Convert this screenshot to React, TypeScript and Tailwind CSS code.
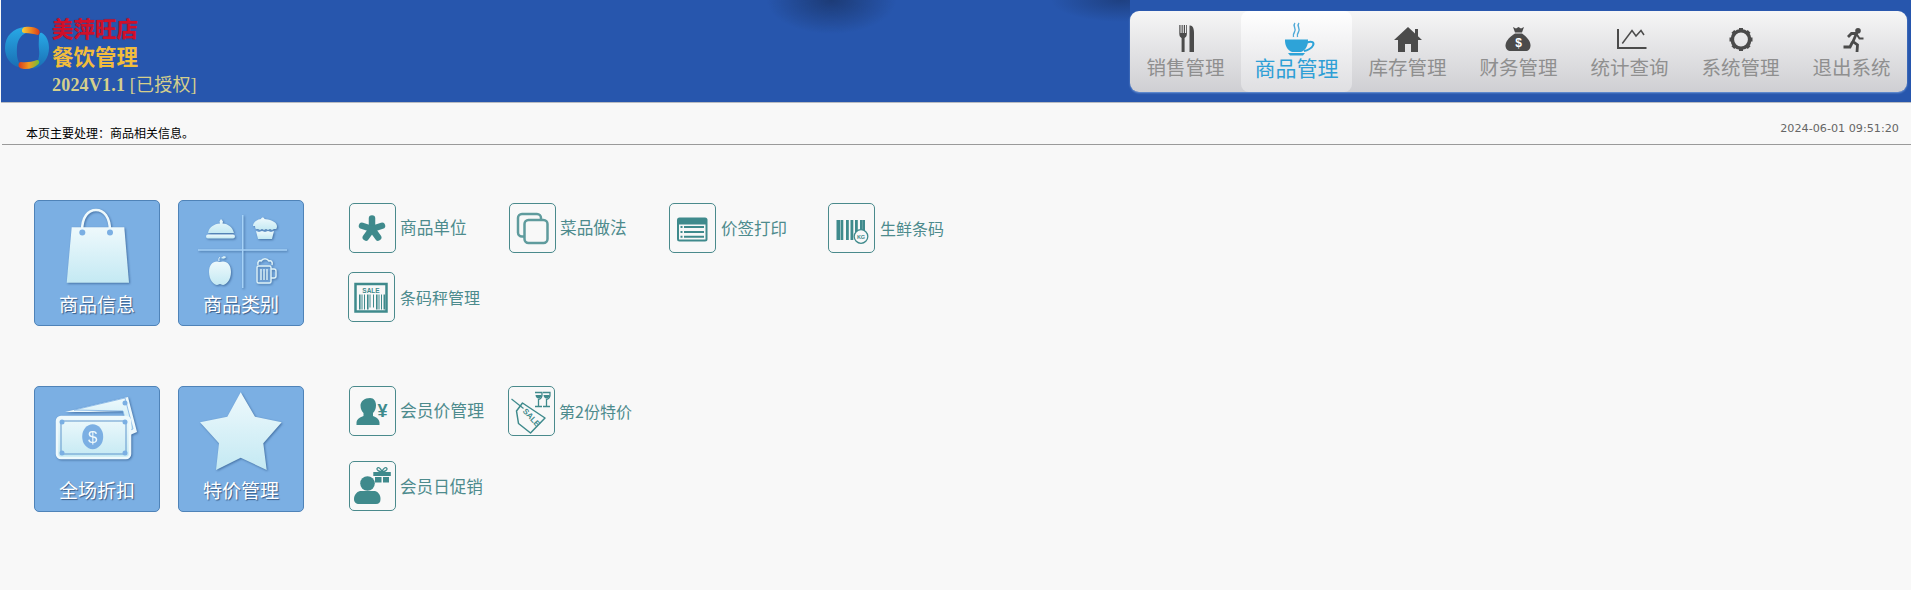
import { useId, type ReactNode } from 'react';

const GRAY = '#4b4b4b';
const TEAL = '#3f8a8c';

function NavIcon({ children }: { children: ReactNode }) {
    return <svg width="44" height="36" viewBox="0 0 44 36">{children}</svg>;
}

const navItems: { label: string; active?: boolean; icon: ReactNode }[] = [
    {
        label: '销售管理',
        icon: (
            <g fill={GRAY}>
                <path d="M15.3 5h1.2v8h1.1V5h1.1v8h1.1V5H21v8h1.1V5h.8v8.500c0 2.500-1 3.800-2.300 4.500V32h-3V18c-1.400-.7-2.300-2-2.300-4.500z" />
                <path d="M25.500 32V5.500C28.500 5 30 8 30 13v19z" />
            </g>
        ),
    },
    {
        label: '商品管理',
        active: true,
        icon: (
            <g>
                <path d="M20 3c-3 3 2 5-.5 9-1 1.500-1.500 3-1 5M24 3c-3 3 2 5-.5 9-1 1.500-1.500 3-1 5" fill="none" stroke="#4fa9d8" strokeWidth="1.400" />
                <path d="M10 19.500h23c.2 6.500-2.500 10.800-7 12.500h-9c-4.500-1.700-7.200-6-7-12.500z" fill="#2ea3d8" />
                <path d="M32 22.500c5-2 7.500 0 6 3-1 2.500-5.500 5-9 5.500" fill="none" stroke="#2ea3d8" strokeWidth="2" />
                <path d="M13 33h17l-2 2.500H15z" fill="#2ea3d8" />
            </g>
        ),
    },
    {
        label: '库存管理',
        icon: <path d="M22 7l7 6.500V9h3v7.300l4 3.700h-4v12h-7v-8h-6v8h-7V20H8z" fill={GRAY} />,
    },
    {
        label: '财务管理',
        icon: (
            <g>
                <path d="M16 7l3 1.500L21.500 7 24 8.500 27 7l-2 5.500h-7z" fill={GRAY} />
                <path d="M18 13.500h7c4 2.500 8.500 7 8.500 12 0 3.500-2 5.500-5 5.500H14c-3.500 0-5.500-2-5.500-5.500 0-5 5.500-9.500 9.500-12z" fill={GRAY} />
                <text x="21.500" y="27" textAnchor="middle" fontSize="12" fontWeight="700" fill="#fff" fontFamily="Liberation Sans, sans-serif">$</text>
            </g>
        ),
    },
    {
        label: '统计查询',
        icon: (
            <g fill="none" stroke={GRAY}>
                <path d="M10 9v19h28.500" strokeWidth="2" />
                <path d="M14.300 23.500L24 10.500l4 5.500 5-5.500 3 4.500" strokeWidth="1.500" />
            </g>
        ),
    },
    {
        label: '系统管理',
        icon: (
            <g fill={GRAY}>
                <circle cx="22" cy="19.500" r="8.700" fill="none" stroke={GRAY} strokeWidth="3.600" />
                {[0, 45, 90, 135, 180, 225, 270, 315].map(a => (
                    <rect key={a} x="20" y="8" width="4" height="3.500" transform={`rotate(${a} 22 19.500)`} />
                ))}
            </g>
        ),
    },
    {
        label: '退出系统',
        icon: (
            <g fill="none" stroke={GRAY} strokeWidth="2.800">
                <circle cx="28" cy="10.800" r="2.800" fill={GRAY} stroke="none" />
                <path d="M18 17l3.500-3.500h5l-3.500 8 4.500 3.500-.5 7" />
                <path d="M26.500 14l3 4.500h4" strokeWidth="2" />
                <path d="M22.500 22l-2.500 5h-6.500" />
            </g>
        ),
    },
];

function TileIcon({ children }: { children: (fill: string) => ReactNode }) {
    const id = useId();
    return (
        <svg width="124" height="92" viewBox="1 1 124 92" className="drop-shadow-[1px_1.500px_1px_rgba(40,80,130,0.65)]">
            <defs>
                <linearGradient id={id} x1="0" y1="0" x2="0" y2="1">
                    <stop offset="0" stopColor="#eef9fc" />
                    <stop offset="1" stopColor="#c4e9f3" />
                </linearGradient>
            </defs>
            {children(`url(#${id})`)}
        </svg>
    );
}

function Tile({ label, children }: { label: string; children: (fill: string) => ReactNode }) {
    return (
        <div className="flex h-[126px] w-[126px] shrink-0 flex-col items-center rounded-[5px] border border-[#4f83b8] bg-[#7bafe3]">
            <TileIcon>{children}</TileIcon>
            <span className="-mt-px text-[19px] leading-6 text-white [text-shadow:1px_1px_1px_rgba(40,70,110,0.8)]">{label}</span>
        </div>
    );
}

function SmallIcon({ children, className }: { children: ReactNode; className?: string }) {
    return (
        <div className={`h-[50px] w-[47px] shrink-0 rounded-[5px] border border-[#4a8a8c] ${className ?? ''}`}>
            <svg width="45" height="48" viewBox="1 1 45 48" className="block">{children}</svg>
        </div>
    );
}

const sansSmall = 'Liberation Sans, sans-serif';

const unitIcon = (
    <g stroke={TEAL} strokeWidth="6.500" strokeLinecap="round">
        {[0, 72, 144, 216, 288].map(a => (
            <line key={a} x1="23" y1="26" x2="23" y2="15.500" transform={`rotate(${a} 23 26)`} />
        ))}
    </g>
);

const copyIcon = (
    <g fill="none" stroke="#5f9b9d" strokeWidth="2.500">
        <path d="M15 33.500h-2a4 4 0 0 1-4-4V15a4 4 0 0 1 4-4h15a4 4 0 0 1 4 4v2" />
        <rect x="15.500" y="17" width="23" height="23" rx="4" />
    </g>
);

const labelIcon = (
    <g>
        <rect x="8" y="14.500" width="30.500" height="24" rx="2.500" fill={TEAL} />
        <rect x="10" y="21.500" width="26.500" height="15" fill="#f8f8f8" />
        <path d="M15 24h20M15 29h20M15 33.700h20" stroke={TEAL} strokeWidth="2" />
        <path d="M11.500 24h2M11.500 29h2M11.500 33.700h2" stroke={TEAL} strokeWidth="2" />
    </g>
);

const freshIcon = (
    <g>
        {[8.500, 12.500, 18, 22.500, 27, 32, 35].map((x, i) => (
            <rect key={x} x={x} y="17" width={i === 0 ? 3.500 : i === 6 ? 2 : 2.800} height="20" fill={TEAL} />
        ))}
        <circle cx="33" cy="33.500" r="6.800" fill="#f8f8f8" stroke={TEAL} strokeWidth="1.300" />
        <text x="33" y="35.500" textAnchor="middle" fontSize="5.500" fontWeight="700" fill={TEAL} fontFamily={sansSmall}>KG</text>
    </g>
);

const scaleIcon = (
    <g>
        <rect x="7.500" y="12" width="31" height="27.500" fill="none" stroke={TEAL} strokeWidth="2.500" />
        <text x="23" y="21" textAnchor="middle" fontSize="6.500" fontWeight="700" fill={TEAL} fontFamily={sansSmall}>SALE</text>
        {[11, 13.500, 16, 19, 21.500, 25, 28, 30.500, 33, 35.500].map((x, i) => (
            <rect key={x} x={x} y="22.500" width={i % 3 === 0 ? 1.600 : 1} height={i === 4 || i === 5 ? 13 : 15} fill={TEAL} />
        ))}
    </g>
);

const memberPriceIcon = (
    <g>
        <path d="M21 12c4 0 6 3.500 6 7.500 0 3.500-1.500 6-3 7.500v3c3 1 6 2.500 6.500 6.500V39H7.500v-2.500c.5-4 4-5.500 7-6.500v-3c-1.500-1.500-3-4-3-7.500 0-4 4-7.500 9.500-7.500z" fill={TEAL} />
        <text x="33.500" y="31" textAnchor="middle" fontSize="18" fontWeight="700" fill={TEAL} fontFamily={sansSmall}>¥</text>
    </g>
);

const tagIcon = (
    <g>
        <path d="M14.500 17L37 32 22.500 47 10.500 37.500 8.500 25z" fill="none" stroke={TEAL} strokeWidth="1.500" strokeLinejoin="round" />
        <path d="M3.500 13l12 9.500" stroke={TEAL} strokeWidth="1.200" />
        <text x="23" y="34" textAnchor="middle" fontSize="8" fontWeight="700" fill={TEAL} fontFamily={sansSmall} transform="rotate(48 23 32)">SALE</text>
        <path d="M27 6.500h7c.3 4-1 6.500-3.500 7V20M27 20.500h7M35 6.500h7c.3 4-1 6.500-3.500 7V20M35 20.500h7" fill="none" stroke={TEAL} strokeWidth="1.300" />
        <path d="M27.500 9h6c-.2 2-1.300 3.500-3 3.500S27.700 11 27.500 9zM35.500 9h6c-.2 2-1.300 3.500-3 3.500S35.700 11 35.500 9z" fill={TEAL} />
    </g>
);

const giftIcon = (
    <g fill={TEAL}>
        <circle cx="18.500" cy="22.500" r="7.300" />
        <path d="M11 30h15c3.500 1 5.500 4 5.500 8 0 3.500-1.500 5-4.500 5H10c-3 0-5-1.500-5-5 0-4 2.500-7 6-8z" />
        <rect x="24.300" y="11" width="17.500" height="4" />
        <rect x="26" y="16" width="6.500" height="5.500" />
        <rect x="34" y="16" width="6" height="5.500" />
        <path d="M33 11c-3-.5-5.500-2-5-3.500 1-2 4-.5 5 3.500zM33 11c3-.5 5.500-2 5-3.500-1-2-4-.5-5 3.500z" fill="none" stroke={TEAL} strokeWidth="1.300" />
    </g>
);

type SmallItem = { label: string; icon: ReactNode; boxClass?: string; textClass: string };

const itemsA: SmallItem[] = [
    { label: '商品单位', icon: unitIcon, textClass: 'text-[16.700px]' },
    { label: '菜品做法', icon: copyIcon, textClass: 'text-[16.700px]' },
    { label: '价签打印', icon: labelIcon, textClass: 'ml-px text-[16.500px]' },
    { label: '生鲜条码', icon: freshIcon, boxClass: '-ml-px', textClass: 'ml-px text-[16px]' },
    { label: '条码秤管理', icon: scaleIcon, boxClass: '-ml-px', textClass: 'ml-px text-[16px]' },
];

const itemsB: SmallItem[] = [
    { label: '会员价管理', icon: memberPriceIcon, textClass: 'text-[16.800px]' },
    { label: '第2份特价', icon: tagIcon, boxClass: '-ml-px', textClass: 'text-[16px]' },
    { label: '会员日促销', icon: giftIcon, textClass: 'text-[16.600px]' },
];

function Item({ item }: { item: SmallItem }) {
    return (
        <div className="flex h-[50px] w-[160px] items-center gap-[4px]">
            <SmallIcon className={item.boxClass}>{item.icon}</SmallIcon>
            <span className={`text-[#4d8b8d] ${item.textClass}`}>{item.label}</span>
        </div>
    );
}

function Logo() {
    return (
        <svg width="46" height="46" viewBox="0 0 46 46" className="mt-[24px] ml-[3px] shrink-0">
            <defs>
                <linearGradient id="logoTop" x1="0" y1="0" x2="1" y2="0">
                    <stop offset="0" stopColor="#f7d13a" />
                    <stop offset="0.6" stopColor="#ec7a1c" />
                    <stop offset="1" stopColor="#d93a1e" />
                </linearGradient>
                <linearGradient id="logoBot" x1="0" y1="0" x2="1" y2="0">
                    <stop offset="0" stopColor="#d93a1e" />
                    <stop offset="0.5" stopColor="#f09a20" />
                    <stop offset="1" stopColor="#6bbf3a" />
                </linearGradient>
                <linearGradient id="logoBlue" x1="0" y1="0" x2="0" y2="1">
                    <stop offset="0" stopColor="#28a9e6" />
                    <stop offset="1" stopColor="#1a6fb4" />
                </linearGradient>
            </defs>
            <path d="M21 3C9 4 1 12 1 24c0 10 6 17 13 19 3 .5 4-1 2-3-3-4-3.500-10-3-17 .5-7 4-12 9-14 2-1 1-6-1-6z" fill="url(#logoBlue)" />
            <path d="M38 9c5 3 7 9 7 15 0 10-6 17-13 20-3 1-5 0-3-2 5-3 7-9 6-17-.5-6 0-9 0-12 0-3 1-5 3-4z" fill="url(#logoBlue)" />
            <path d="M21 3c5-.7 11 0 14 3 1 1.500 1 4-1 5-4-1-8-2-13-2-2 .2-3.500-1-3-3 .4-1.700 1.500-2.800 3-3z" fill="url(#logoTop)" />
            <path d="M17 38c5 .5 11 0 16-2 2 0 3 2 1.500 4-3 3-8 5-13 5-4 0-7-1-7-4 0-2 1-3 2.500-3z" fill="url(#logoBot)" />
        </svg>
    );
}

export default function App() {
    return (
        <div className="h-[590px] w-[1911px] overflow-hidden bg-[#f8f8f8] font-['Noto_Sans_CJK_SC','Liberation_Sans',sans-serif]">
            <header className="ml-px flex h-[103px] justify-between border-b border-[#b9bcc2] bg-[#2756ad]">
                <div className="flex">
                    <Logo />
                    <div className="ml-[2px] flex flex-col pt-[14px]">
                        <span className="text-[21.500px] leading-7 font-bold text-[#d10f2a] [text-shadow:0_0_1px_#8a1030]">美萍旺店</span>
                        <span className="text-[21.500px] leading-7 font-bold text-[#f2bd3c]">餐饮管理</span>
                        <span className="mt-[4px] font-['Liberation_Serif','Noto_Sans_CJK_SC',serif] text-[18px] leading-[22px] font-bold tracking-[0.2px] text-[#d5cf8c]">
                            2024V1.1 <span className="font-normal">[已授权]</span>
                        </span>
                    </div>
                </div>
                <div className="flex-1 bg-[radial-gradient(ellipse_65px_34px_at_68%_0px,rgba(25,50,100,0.75),transparent),radial-gradient(ellipse_70px_22px_at_99%_0px,rgba(25,50,100,0.6),transparent)]" />
                <nav className="mt-[11px] mr-[4px] flex h-[81px] w-[777px] rounded-[9px] bg-gradient-to-b from-[#f6f6f6] to-[#cfcfd3] shadow-[0_1px_2px_rgba(120,160,220,0.9)]">
                    {navItems.map(item => (
                        <div
                            key={item.label}
                            className={
                                item.active
                                    ? 'flex flex-1 flex-col items-center rounded-[8px] bg-gradient-to-b from-[#ffffff] to-[#dfdfe2] pt-[9px] text-[#2e9fd6]'
                                    : 'flex flex-1 flex-col items-center pt-[9px] text-[#8f8f8f]'
                            }
                        >
                            <NavIcon>{item.icon}</NavIcon>
                            <span className={item.active ? '-mt-px text-[21px] leading-6 whitespace-nowrap' : '-mt-px text-[19.500px] leading-6 whitespace-nowrap'}>{item.label}</span>
                        </div>
                    ))}
                </nav>
            </header>

            <div className="ml-[2px] flex h-[42px] items-start justify-between border-b border-[#9a9a9a] pr-[12px] pl-[24px]">
                <span className="mt-[22px] text-[12px] leading-4 text-black">本页主要处理：商品相关信息。</span>
                <span className="mt-[18px] font-['DejaVu_Sans',sans-serif] text-[11.200px] leading-4 text-[#666666]">2024-06-01 09:51:20</span>
            </div>

            <main className="flex flex-col gap-[60px] pt-[55px] pl-[34px]">
                <section className="flex">
                    <div className="flex gap-[18px]">
                        <Tile label="商品信息">
                            {fill => (
                                <g>
                                    <path d="M48 31C48 17 54 10 62 10s14 7 14 21" fill="none" stroke="#eef9fc" strokeWidth="2.500" />
                                    <path d="M37.700 27.300h52.600L95 82.700H32.700z" fill={fill} />
                                    <circle cx="48.300" cy="32.500" r="3" fill="#7bafe3" />
                                    <circle cx="76" cy="32.500" r="3" fill="#7bafe3" />
                                </g>
                            )}
                        </Tile>
                        <Tile label="商品类别">
                            {fill => (
                                <g>
                                    <path d="M64.700 15v73M20 50h89" stroke="#a6d2f7" strokeWidth="1.500" />
                                    <g fill={fill}>
                                        <path d="M30 33c1-6 6-9 12-9.500l-.5-2 1.500-2.500 2 2.500-.5 2c6 .5 10 3.500 11.500 9.500z" />
                                        <rect x="28" y="34.500" width="29" height="4" rx="2" />
                                        <path d="M75 26c0-4 5-7 8-7 .5-2 3-2 3.500 0 4 .5 12 2 12.500 7 0 2.500-1 3-1 3l-2 0-2 1-2-1-2 1-2-1-2 1-2-1-2 1-2-1-2 0s-1-.5-1-3z" />
                                        <path d="M78 31l3 1 3-1 3 1 3-1 3 1 3-1-2 8H80z" />
                                        <path d="M42 62c-6-2-11 2-11 10 0 8 5 13 8 13 1.500 0 2-1 3-1s1.500 1 3 1c3 0 8-5 8-13 0-8-5-12-11-10z" />
                                        <path d="M41 61c-.5-2 0-3 1-4" fill="none" stroke="#e6f6fa" strokeWidth="1" />
                                        <path d="M43 58c2-2 4-2 5-1-1 2-3 2-5 1z" />
                                        <path d="M80 65c-1-4 2-5 3-4 2-3 6-3 8 0 2-1 4 1 3 4" fill="none" stroke="#dff3f8" strokeWidth="1.500" />
                                    </g>
                                    <g fill="none" stroke="#dff3f8" strokeWidth="1.400">
                                        <rect x="79" y="66" width="14" height="17" rx="1.500" />
                                        <path d="M83 69v11M86 69v11M89 69v11M93 69h3c1.500 0 2 1 2 2v5c0 1-.5 2-2 2h-3" />
                                    </g>
                                </g>
                            )}
                        </Tile>
                    </div>
                    <div className="ml-[45px] flex w-[640px] flex-wrap content-start gap-y-[19px] pt-[3px]">
                        {itemsA.map(item => <Item key={item.label} item={item} />)}
                    </div>
                </section>

                <section className="flex">
                    <div className="flex gap-[18px]">
                        <Tile label="全场折扣">
                            {fill => (
                                <g>
                                    <path d="M31 26l63-15 9 35-7 3-7-24-34 1z" fill="#eef9fc" />
                                    <path d="M40 24l51-12 8 31-5 2-5-20z" fill={fill} stroke="#7bafe3" strokeWidth="0.800" />
                                    <circle cx="91" cy="17" r="2.500" fill="#7bafe3" />
                                    <rect x="23" y="31" width="73" height="41" rx="4" fill={fill} stroke="#eef9fc" strokeWidth="2.500" />
                                    <rect x="27" y="35" width="65" height="33" rx="1" fill="none" stroke="#5f95cc" strokeWidth="1" />
                                    <ellipse cx="58.700" cy="50.700" rx="10.500" ry="12.500" fill="#7bafe3" />
                                    <text x="58.700" y="57" textAnchor="middle" fontSize="17" fill="#eef9fc" fontFamily={sansSmall}>$</text>
                                    <g fill="#7bafe3">
                                        <circle cx="28" cy="36" r="2.500" />
                                        <circle cx="91" cy="36" r="2.500" />
                                        <circle cx="28" cy="67" r="2.500" />
                                        <circle cx="91" cy="67" r="2.500" />
                                    </g>
                                </g>
                            )}
                        </Tile>
                        <Tile label="特价管理">
                            {fill => (
                                <path
                                    d="M62.700 6.300L77 30.700l26.700 5.600-18.400 21L88.700 84 62.700 71.700 38 84l3-26.700-19-21 27.300-5.600z"
                                    fill={fill}
                                />
                            )}
                        </Tile>
                    </div>
                    <div className="ml-[45px] flex w-[320px] flex-wrap content-start gap-y-[25px]">
                        {itemsB.map(item => <Item key={item.label} item={item} />)}
                    </div>
                </section>
            </main>
        </div>
    );
}
